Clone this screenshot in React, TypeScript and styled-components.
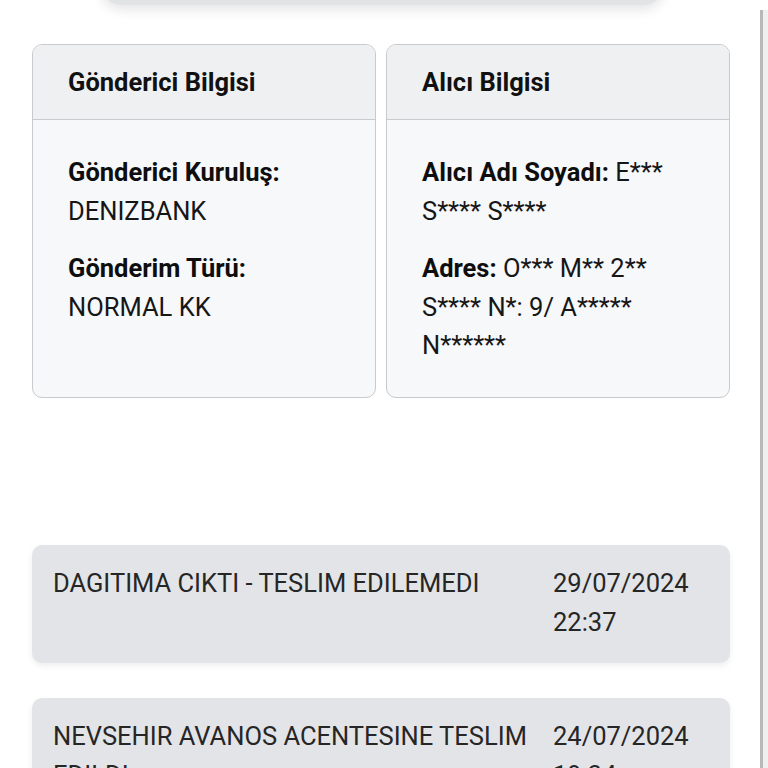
import React from 'react';
import styled, { createGlobalStyle } from 'styled-components';

const GlobalStyle = createGlobalStyle`
  html, body {
    margin: 0;
    padding: 0;
    overflow: hidden;
    background: #ffffff;
  }
  body {
    font-family: Roboto, 'Noto Sans', 'Liberation Sans', sans-serif;
    color: #1c1c1c;
  }
`;

const Page = styled.div`
  display: grid;
  grid-template-columns: 1fr 8px;
  height: 100vh;
  overflow: hidden;
`;

const Content = styled.main`
  padding: 0 30px 0 32px;
  min-width: 0;
`;

const ScrollRail = styled.div`
  margin-top: 10px;
  background: #efefef;
  border-left: 3px solid #b8b8b8;
`;

const TopCard = styled.div`
  height: 65px;
  margin: -60px 65px 0 68px;
  background: #e2e3e5;
  border-radius: 22px;
  box-shadow: 0 5px 12px rgba(0, 0, 0, 0.1);
`;

const CardsRow = styled.section`
  display: grid;
  grid-template-columns: 1fr 1fr;
  gap: 10px;
  margin-top: 39px;
`;

const InfoCard = styled.div`
  display: flex;
  flex-direction: column;
  background: #f7f8fa;
  border: 1.5px solid #c9cacd;
  border-radius: 10px;
  overflow: hidden;
`;

const CardHeader = styled.div`
  display: flex;
  align-items: center;
  height: 74px;
  padding: 0 35px;
  background: #eff0f2;
  border-bottom: 1.5px solid #c9cacd;
  font-size: 25.5px;
  font-weight: 700;
  color: #111;
`;

const CardBody = styled.div`
  padding: 33px 35px 32px;
`;

const Field = styled.p`
  margin: 0;
  font-size: 25.5px;
  line-height: 38.5px;
  color: #161616;

  & + & {
    margin-top: 19px;
  }
`;

const Label = styled.strong`
  font-weight: 700;
  color: #0e0e0e;
`;

const Timeline = styled.section`
  display: flex;
  flex-direction: column;
  gap: 35px;
  margin-top: 147px;
`;

const EventCard = styled.div`
  display: grid;
  grid-template-columns: 1fr 137px;
  column-gap: 18px;
  padding: 19px 40px 21px 21px;
  background: #e3e4e7;
  border-radius: 10px;
  box-shadow: 0 3px 6px rgba(0, 0, 0, 0.07);
  font-size: 25.5px;
  line-height: 39px;
  color: #262626;
`;

const EventText = styled.div`
  min-width: 0;
`;

const EventDate = styled.div`
  white-space: normal;
`;

type Field = { label: string; value: string };

const sender: Field[] = [
  { label: 'Gönderici Kuruluş:', value: 'DENIZBANK' },
  { label: 'Gönderim Türü:', value: 'NORMAL KK' },
];

const receiver: Field[] = [
  { label: 'Alıcı Adı Soyadı:', value: 'E*** S**** S****' },
  { label: 'Adres:', value: 'O*** M** 2** S**** N*: 9/ A***** N******' },
];

const events = [
  { status: 'DAGITIMA CIKTI - TESLIM EDILEMEDI', date: '29/07/2024', time: '22:37' },
  { status: 'NEVSEHIR AVANOS ACENTESINE TESLIM EDILDI', date: '24/07/2024', time: '19:34' },
];

function InfoBox({ title, fields, breakLabel }: { title: string; fields: Field[]; breakLabel?: boolean }) {
  return (
    <InfoCard>
      <CardHeader>{title}</CardHeader>
      <CardBody>
        {fields.map((f) => (
          <Field key={f.label}>
            <Label>{f.label}</Label>
            {breakLabel ? <br /> : ' '}
            {f.value}
          </Field>
        ))}
      </CardBody>
    </InfoCard>
  );
}

export default function App() {
  return (
    <>
      <GlobalStyle />
      <Page>
        <Content>
          <TopCard />
          <CardsRow>
            <InfoBox title="Gönderici Bilgisi" fields={sender} breakLabel />
            <InfoBox title="Alıcı Bilgisi" fields={receiver} />
          </CardsRow>
          <Timeline>
            {events.map((e) => (
              <EventCard key={e.date}>
                <EventText>{e.status}</EventText>
                <EventDate>
                  {e.date}
                  <br />
                  {e.time}
                </EventDate>
              </EventCard>
            ))}
          </Timeline>
        </Content>
        <ScrollRail />
      </Page>
    </>
  );
}
